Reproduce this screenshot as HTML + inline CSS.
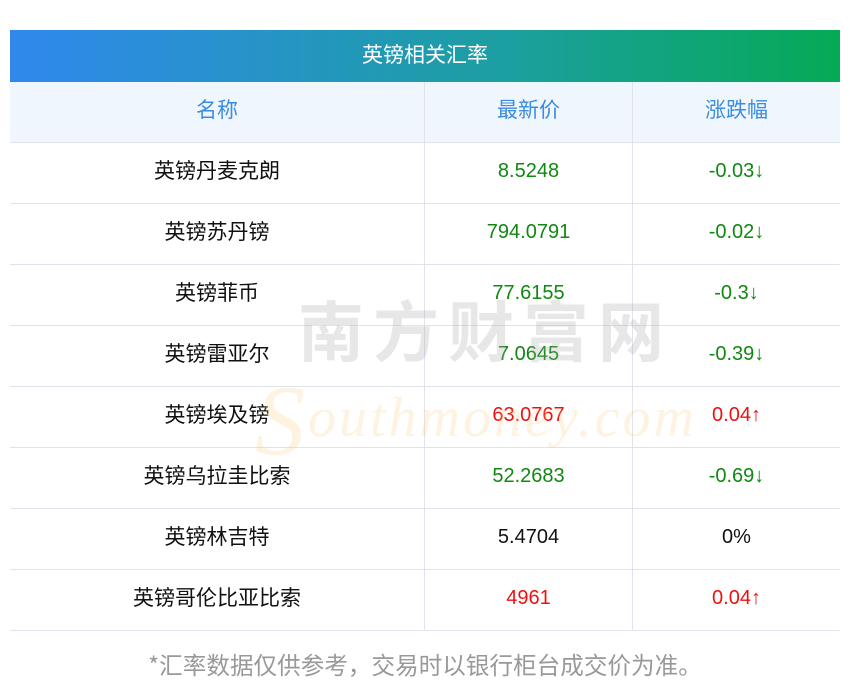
<!DOCTYPE html>
<html><head><meta charset="utf-8"><style>
body{margin:0;width:850px;height:697px;background:#fff;position:relative;overflow:hidden;font-family:"Liberation Sans","Noto Sans CJK SC",sans-serif;}
.title{position:absolute;left:10px;top:30px;width:830px;height:52px;background:linear-gradient(90deg,#3088ee,#1c9fa0 60%,#05aa55);color:#fff;font-size:21px;line-height:48px;text-align:center;font-family:"Noto Sans CJK SC",sans-serif;}
.row{position:absolute;left:10px;width:830px;height:60px;border-bottom:1px solid #e0e3ec;display:flex;font-size:20px;color:#111}
.row div{height:60px;line-height:56px;text-align:center}
.row div:nth-child(1){width:414px;font-family:"Noto Sans CJK SC",sans-serif;font-size:21px;line-height:54px}
.row div:nth-child(2){width:207px;border-left:1px solid #e0e3ec}
.row div:nth-child(3){width:207px;border-left:1px solid #e0e3ec}
.row.h{background:#f0f6fe;color:#3a8de0}
.row.h div{font-family:"Noto Sans CJK SC",sans-serif;font-size:21px;line-height:54px}
.g{color:#118811}.r{color:#ee1111}
.wm1{position:absolute;left:298px;top:288px;font-size:66px;color:rgba(170,170,170,.28);letter-spacing:9px;font-weight:bold;pointer-events:none;font-family:"Noto Sans CJK SC",sans-serif;line-height:80px}
.wm2{position:absolute;left:255px;top:345px;font-size:56px;font-family:"Liberation Serif",serif;font-style:italic;color:rgba(250,200,120,.22);letter-spacing:3px;pointer-events:none}
.foot{position:absolute;left:0;width:850px;top:648px;text-align:center;color:#999;font-size:23.6px;font-family:"Noto Sans CJK SC",sans-serif;line-height:32px}
</style></head><body>
<div class="title">英镑相关汇率</div>
<div class="row h" style="top:82px"><div>名称</div><div>最新价</div><div>涨跌幅</div></div>
<div class="row" style="top:143px"><div>英镑丹麦克朗</div><div class="g">8.5248</div><div class="g">-0.03↓</div></div>
<div class="row" style="top:204px"><div>英镑苏丹镑</div><div class="g">794.0791</div><div class="g">-0.02↓</div></div>
<div class="row" style="top:265px"><div>英镑菲币</div><div class="g">77.6155</div><div class="g">-0.3↓</div></div>
<div class="row" style="top:326px"><div>英镑雷亚尔</div><div class="g">7.0645</div><div class="g">-0.39↓</div></div>
<div class="row" style="top:387px"><div>英镑埃及镑</div><div class="r">63.0767</div><div class="r">0.04↑</div></div>
<div class="row" style="top:448px"><div>英镑乌拉圭比索</div><div class="g">52.2683</div><div class="g">-0.69↓</div></div>
<div class="row" style="top:509px"><div>英镑林吉特</div><div>5.4704</div><div>0%</div></div>
<div class="row" style="top:570px"><div>英镑哥伦比亚比索</div><div class="r">4961</div><div class="r">0.04↑</div></div>
<div class="wm1">南方财富网</div>
<div class="wm2"><span style="font-size:100px;position:relative;top:18px">S</span>outhmoney.com</div>
<div class="foot">*汇率数据仅供参考，交易时以银行柜台成交价为准。</div>
</body></html>
